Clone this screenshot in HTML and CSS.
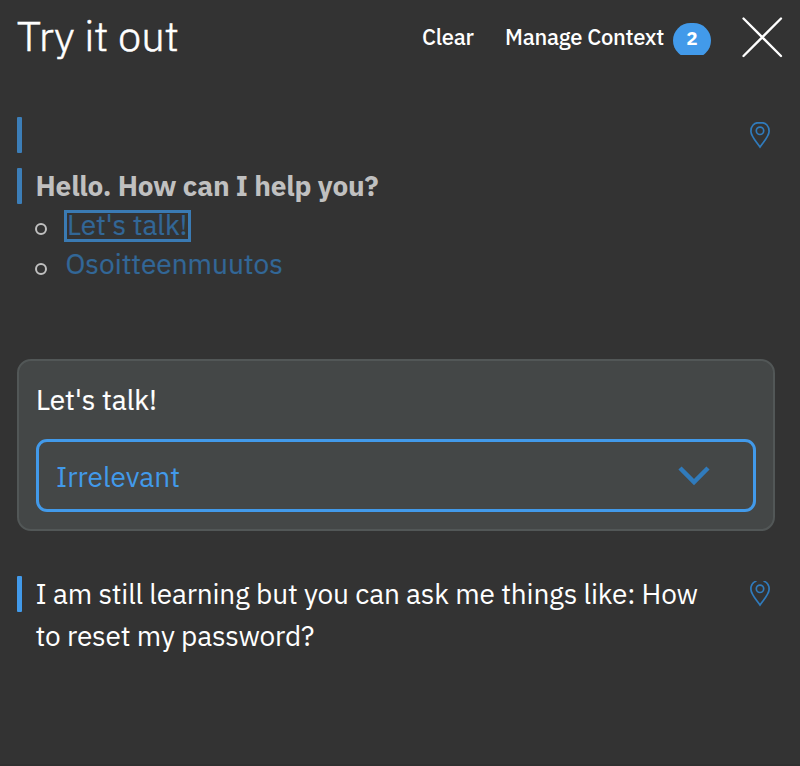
FILE: index.html
```html
<!DOCTYPE html>
<html lang="en">
<head>
<meta charset="utf-8">
<title>Try it out</title>
<link rel="stylesheet" href="styles.css">
</head>
<body>
<main class="panel">
  <header class="header">
    <h1 class="title">Try it out</h1>
    <button class="action clear">Clear</button>
    <button class="action manage">Manage Context</button>
    <span class="badge"><span class="count">2</span></span>
    <button class="close" aria-label="Close">
      <svg width="42" height="42" viewBox="0 0 42 42"><path d="M2.500 1.500 40 39M40 1.500 2.500 39" fill="none" stroke="currentColor" stroke-width="2.300" stroke-linecap="round"/></svg>
    </button>
  </header>

  <section class="row past first">
    <span class="bar"></span>
    <div class="content"></div>
    <svg class="pin" width="20" height="27" viewBox="0 0 20 27"><path d="M10 25C7.500 21 .9 14.500 .9 9.200C.9 4 4.500 .8 7.500 .8H12.500C15.500 .8 19.100 4 19.100 9.200C19.100 14.500 12.500 21 10 25Z"/><circle cx="10" cy="8.800" r="3.700"/></svg>
  </section>

  <section class="row past">
    <span class="bar"></span>
    <div class="content">
      <p class="greeting">Hello. How can I help you?</p>
      <ul class="options">
        <li><a class="option selected">Let's talk!</a></li>
        <li><a class="option">Osoitteenmuutos</a></li>
      </ul>
    </div>
  </section>

  <section class="card">
    <p class="utterance">Let's talk!</p>
    <div class="select">
      <span class="intent">Irrelevant</span>
      <svg class="chevron" width="32" height="20" viewBox="0 0 32 20"><path d="M2 2 16 16 30 2" fill="none" stroke="currentColor" stroke-width="4.500"/></svg>
    </div>
  </section>

  <section class="row reply">
    <span class="bar"></span>
    <p class="content answer"><span class="line">I am still learning but you can ask me things like: How</span> <span class="line">to reset my password?</span></p>
    <svg class="pin" width="20" height="26" viewBox="0 1 20 26"><path d="M6.500 1C3.500 2 .9 5 .9 9.200C.9 14.500 7.500 21 10 25C12.500 21 19.100 14.500 19.100 9.200C19.100 5 16.500 2 13.500 1"/><circle cx="10" cy="8.800" r="3.700"/></svg>
  </section>
</main>
</body>
</html>
```

FILE: styles.css
```css
* { box-sizing: border-box; }
body {
  margin: 0;
  background: #333;
  color: #fff;
  font: 28px/42px "IBM Plex Sans", Roboto, sans-serif;
}
h1, p, ul { margin: 0; padding: 0; font-weight: inherit; }
button { border: 0; padding: 0; background: none; color: inherit; font: inherit; }
svg { display: block; }
.panel { height: 766px; padding: 0 17px; overflow: hidden; border-bottom: 2px solid #303030; }
.header { display: flex; height: 76px; }
.title { width: 405px; padding-top: 10px; font-size: 42px; line-height: 52px; font-weight: 300; letter-spacing: -.1px; -webkit-text-stroke: .5px #fff; white-space: nowrap; }
.action { height: 42px; margin-top: 16px; font-size: 22px; font-weight: 500; letter-spacing: -.25px; text-align: left; white-space: nowrap; }
.clear { width: 83px; }
.manage { width: 168px; }
.badge { width: 38px; height: 32px; margin-top: 23px; overflow: hidden; }
.count { display: block; height: 35px; border-radius: 17.5px; background: #429aea; font-size: 19px; line-height: 31px; font-weight: 700; text-align: center; }
.close { width: 42px; height: 42px; margin: 17px 0 0 30px; }
.row { display: flex; }
.first { height: 51px; margin-top: 41px; }
.bar { flex: none; width: 5px; height: 36px; border-radius: 1px; background: #429aea; }
.past .bar { background: #3c7eb8; }
.content { flex: 1; padding-left: 13.5px; }
.pin { flex: none; margin: 5px 13.5px 0 0; fill: none; stroke: #307bbc; stroke-width: 1.700; }
.greeting { height: 39px; line-height: 35px; font-weight: 700; letter-spacing: -.18px; color: #c0c0c0; }
.options { list-style: none; color: #326797; }
.options li { display: flex; height: 40px; }
.options li::before { content: ""; box-sizing: border-box; width: 12px; height: 12px; margin: 16px 18.5px 0 -.5px; border: 2px solid #c0c0c0; border-radius: 50%; }
.option { height: 32px; margin-top: 3px; line-height: 27px; -webkit-text-stroke: .2px #326797; }
.selected { width: 127px; border: 3px solid #3a7ab3; line-height: 24px; margin: 3px 0 0 -1.5px; white-space: nowrap; letter-spacing: -.05px; }
.card { width: 758px; height: 172px; margin-top: 72px; padding: 19px 17px; border: 2px solid #525757; border-radius: 14px; background: #444747; }
.utterance { height: 59px; line-height: 40px; -webkit-text-stroke: .2px #fff; }
.select { display: flex; justify-content: space-between; width: 720px; height: 73px; padding: 0 43.5px 0 17px; border: 3px solid #429aea; border-radius: 11px; color: #429aea; line-height: 70px; }
.chevron { margin-top: 24px; color: #307bbc; }
.reply { margin-top: 45px; }
.answer { margin-top: -3px; letter-spacing: -.18px; }
.line { display: block; white-space: nowrap; }
```
